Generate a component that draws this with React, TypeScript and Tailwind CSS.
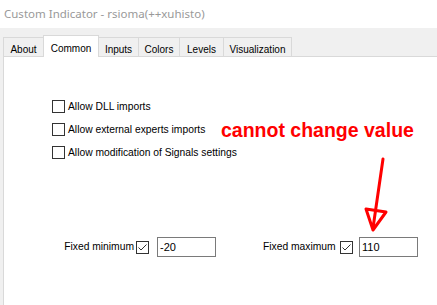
import React from "react";

const tabs = [
  { name: "About", w: "w-[41px]" },
  { name: "Common", w: "w-[56px]", active: true },
  { name: "Inputs", w: "w-[40px]" },
  { name: "Colors", w: "w-[41px]" },
  { name: "Levels", w: "w-[44px]" },
  { name: "Visualization", w: "w-[68px]" },
];

const options = [
  "Allow DLL imports",
  "Allow external experts imports",
  "Allow modification of Signals settings",
];

function Check({ checked }: { checked?: boolean }) {
  return (
    <div className="w-[13px] h-[13px] border border-[#333333] bg-white flex items-center justify-center shrink-0">
      {checked && (
        <svg width="11" height="11" viewBox="0 0 11 11">
          <path d="M1.5 5.5 L4 8 L9.5 2.5" fill="none" stroke="#333333" strokeWidth="1" />
        </svg>
      )}
    </div>
  );
}

export default function App() {
  return (
    <div className="w-[437px] h-[305px] bg-[#f0f0f0] overflow-hidden flex flex-col font-['Liberation_Sans',Arial,sans-serif] text-black">
      {/* title bar */}
      <div className="h-[28px] bg-white flex items-center pl-[4px] text-[11.5px] text-[#999999] font-['Noto_Sans',sans-serif] shrink-0">
        Custom Indicator - rsioma(++xuhisto)
      </div>

      {/* tabs */}
      <div className="h-[28px] flex items-end pl-[3px] shrink-0 relative z-10">
        {tabs.map((t, i) => (
          <div
            key={t.name}
            className={`${t.w} flex justify-center text-[10px] border-t border-r border-[#d9d9d9] ${
              i === 0 ? "border-l" : ""
            } ${
              t.active
                ? "h-[22px] bg-white -mb-px pt-[5px] border-l border-l-[#d9d9d9] -ml-px"
                : "h-[19px] bg-[#f0f0f0] pt-[4px]"
            }`}
          >
            {t.name}
          </div>
        ))}
      </div>

      {/* panel */}
      <div className="flex-1 ml-[3px] bg-white border-l border-t border-[#d9d9d9] relative">
        <div className="flex flex-col mt-[38px] pl-[48px]">
          {options.map((o) => (
            <div key={o} className="h-[23px] flex items-center gap-[3px] text-[10.3px]">
              <Check />
              <span>{o}</span>
            </div>
          ))}
        </div>

        <div className="flex items-center mt-[73px] pl-[60px] text-[10.3px] whitespace-nowrap">
          <span className="w-[70px] shrink-0 text-right">Fixed minimum</span>
          <div className="ml-[2px]">
            <Check checked />
          </div>
          <div className="ml-[8px] w-[59px] shrink-0 h-[20px] border border-[#7a7a7a] flex items-center pl-[2px] text-[11px]">
            -20
          </div>
          <span className="ml-[47px] w-[72px] shrink-0 text-right">Fixed maximum</span>
          <div className="ml-[5px]">
            <Check checked />
          </div>
          <div className="ml-[6px] w-[59px] shrink-0 h-[20px] border border-[#7a7a7a] flex items-center pl-[2px] text-[11px]">
            110
          </div>
        </div>

        {/* annotation */}
        <div className="absolute left-[217px] top-[64px] text-[19.5px] leading-none font-bold text-[#ff0000] whitespace-nowrap">
          cannot change value
        </div>
        <svg
          className="absolute left-[356px] top-[98px]"
          width="35"
          height="80"
          viewBox="0 0 35 80"
        >
          <path
            d="M23 4 L13 73 M6 54 L26 57 L13 75 Z"
            fill="none"
            stroke="#ff0000"
            strokeWidth="3"
            strokeLinejoin="round"
            strokeLinecap="round"
          />
        </svg>
      </div>
    </div>
  );
}
